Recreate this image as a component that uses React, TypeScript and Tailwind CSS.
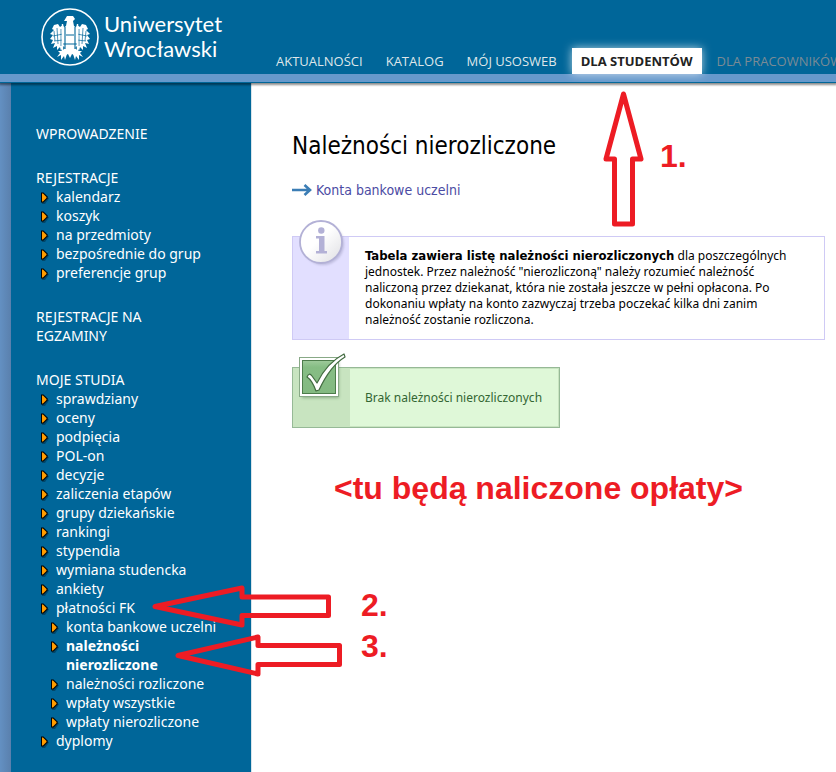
import React from 'react';

type Item = { label: string; active?: boolean; children?: Item[] };
type Section = { title: string; items: Item[] };

const NAV = ['AKTUALNOŚCI', 'KATALOG', 'MÓJ USOSWEB'];

const MENU: Section[] = [
  { title: 'WPROWADZENIE', items: [] },
  {
    title: 'REJESTRACJE',
    items: [
      { label: 'kalendarz' },
      { label: 'koszyk' },
      { label: 'na przedmioty' },
      { label: 'bezpośrednie do grup' },
      { label: 'preferencje grup' },
    ],
  },
  { title: 'REJESTRACJE NA EGZAMINY', items: [] },
  {
    title: 'MOJE STUDIA',
    items: [
      { label: 'sprawdziany' },
      { label: 'oceny' },
      { label: 'podpięcia' },
      { label: 'POL-on' },
      { label: 'decyzje' },
      { label: 'zaliczenia etapów' },
      { label: 'grupy dziekańskie' },
      { label: 'rankingi' },
      { label: 'stypendia' },
      { label: 'wymiana studencka' },
      { label: 'ankiety' },
      {
        label: 'płatności FK',
        children: [
          { label: 'konta bankowe uczelni' },
          { label: 'należności nierozliczone', active: true },
          { label: 'należności rozliczone' },
          { label: 'wpłaty wszystkie' },
          { label: 'wpłaty nierozliczone' },
        ],
      },
      { label: 'dyplomy' },
    ],
  },
];

function Crest() {
  const wing = (
    <g>
      <path d="M25 22 L23 18 L20 20 L18 17 L14 18 L12 22 L14 23 L10 27 L13 28 L10 32 L13 33 L11 37 L15 36 L13 41 L17 39 L17 43 L20 40 L21 44 L23 40 L26 36 Z" fill="#fff" />
      <path d="M17 21 L18 37 M14 24 L15 34 M21 22 L21 39 M13 29 L23 27 M14 34 L23 33" stroke="#006699" strokeWidth="0.7" fill="none" />
      <path d="M26 40 L22 44 L18 44 L20 46 L17 50 L21 48 L21 53 L24 49 L25 53 L27 47 Z" fill="#fff" />
    </g>
  );
  return (
    <svg className="size-[60px] shrink-0" viewBox="0 0 60 60" aria-hidden="true">
      <circle cx="30" cy="30" r="28" fill="none" stroke="#fff" strokeWidth="1.6" />
      {wing}
      <g transform="translate(60 0) scale(-1 1)">{wing}</g>
      <path d="M27 9 L33 9 L35 12 L33 14 L34 19 L38 22 L37 38 L34 43 L34 48 L32 47 L30 51 L28 47 L26 48 L26 43 L23 38 L22 22 L26 19 L27 14 L24 14 Z" fill="#fff" />
      <path d="M25 20 V42 M35 20 V42 M26 28 H34 M23 37 H37" stroke="#006699" strokeWidth="1.1" fill="none" />
      <path d="M22.500 17 V49 M37.500 17 V49" stroke="#fff" strokeWidth="1.4" />
    </svg>
  );
}

function Bullet() {
  return (
    <svg className="mt-[5px] h-[13px] w-[8px] shrink-0" viewBox="0 0 8 13" aria-hidden="true">
      <path d="M1 2 L4 2 L8 6.5 L4 12 L1 12 Z" fill="#000" opacity=".3" />
      <path d="M0 0.500 H2.500 L6.500 4.500 V6.500 L2.500 10.500 H0 Z" fill="#000" />
      <path d="M1 1.500 H2 L5.500 5 V6 L2 9.500 H1 Z" fill="#ff9c00" />
    </svg>
  );
}

function MenuList({ items }: { items: Item[] }) {
  return (
    <ul>
      {items.map((item) => (
        <li key={item.label}>
          <div className="flex gap-[7px]">
            <Bullet />
            <a href="#" className={item.active ? 'w-[120px] font-bold' : 'whitespace-nowrap'}>
              {item.label}
            </a>
          </div>
          {item.children && (
            <div className="pl-[10px]">
              <MenuList items={item.children} />
            </div>
          )}
        </li>
      ))}
    </ul>
  );
}

function InfoIcon() {
  return (
    <svg className="absolute -top-[18px] left-0 h-[50px] w-[57px]" viewBox="0 0 57 50" aria-hidden="true">
      <defs>
        <linearGradient id="disc" x1="0" y1="0" x2="1" y2="1">
          <stop offset=".45" stopColor="#fff" />
          <stop offset="1" stopColor="#dedee2" />
        </linearGradient>
        <filter id="soft" x="-30%" y="-30%" width="160%" height="160%">
          <feGaussianBlur stdDeviation="1.3" />
        </filter>
      </defs>
      <circle cx="30" cy="25" r="21" fill="#8888ad" opacity=".4" filter="url(#soft)" />
      <circle cx="28" cy="23" r="21" fill="url(#disc)" stroke="#b3b1d6" strokeWidth="1.8" />
      <circle cx="28.300" cy="11.500" r="3.200" fill="#b3b1d6" />
      <path d="M23 17 H31.500 V32 H34 V34.500 H23 V32 H26 V19.500 H23 Z" fill="#b3b1d6" />
    </svg>
  );
}

function CheckIcon() {
  return (
    <svg className="absolute -top-[15px] left-[3px] h-[52px] w-[53px]" viewBox="0 0 53 52" aria-hidden="true">
      <defs>
        <linearGradient id="box" x1="0" y1="0" x2="0" y2="1">
          <stop offset="0" stopColor="#a9d0a5" />
          <stop offset=".25" stopColor="#86bd84" />
          <stop offset="1" stopColor="#83b981" />
        </linearGradient>
        <filter id="blur" x="-30%" y="-30%" width="160%" height="160%">
          <feGaussianBlur stdDeviation="1.5" />
        </filter>
      </defs>
      <rect x="6" y="8" width="37" height="37" fill="#365f34" opacity=".4" filter="url(#blur)" />
      <rect x="3.500" y="4.500" width="39" height="39" fill="url(#box)" stroke="#88a986" />
      <rect x="5" y="6" width="36" height="36" fill="none" stroke="#fff" strokeWidth="2" />
      <rect x="6.500" y="7.500" width="33" height="33" fill="none" stroke="#4d7c4b" />
      <path d="M11 24 Q13 19 16 23 L21 30 C28 16 38 6 48 1 L49 4 C39 10 30 22 23 37 L20 38 Q16 27 11 24 Z" fill="#fff" stroke="#426b40" strokeWidth="1.2" strokeLinejoin="round" />
    </svg>
  );
}

export default function App() {
  return (
    <div className="relative flex min-h-screen flex-col overflow-hidden bg-white font-['Open_Sans','Noto_Sans',sans-serif]">
      <header className="relative border-b border-[#006699] bg-[#6699cc] pb-[8px] shadow-[0_1px_2px_1px_rgba(0,0,0,0.45)]">
        <div className="flex h-[74px] justify-between bg-[#006699]">
          <a href="#" className="flex items-start gap-[4px] pl-[40px] pt-[7px] text-white">
            <Crest />
            <span className="pt-[4px] font-[Lato,sans-serif] text-[22px] leading-[25px]">
              Uniwersytet
              <br />
              Wrocławski
            </span>
          </a>
          <nav className="flex w-[568px] shrink-0 items-end gap-[7px] whitespace-nowrap text-[13px] leading-[26px] text-[#dfe6ea]">
            {NAV.map((label) => (
              <a key={label} href="#" className="px-[8px]">
                {label}
              </a>
            ))}
            <a href="#" className="bg-white px-[9px] font-bold text-[#222] shadow-[0_0_10px_rgba(255,255,255,0.7)]">
              DLA STUDENTÓW
            </a>
            <a href="#" className="px-[8px] text-[#7b8b95]">
              DLA PRACOWNIKÓW
            </a>
          </nav>
        </div>
      </header>

      <div className="flex flex-1 bg-linear-to-r from-[#6390c2] to-[#5a80ad] to-[11px] pl-[11px]">
        <aside className="w-[240px] shrink-0 bg-[#006699] pb-5 pl-[25px] pt-[41px] font-['Noto_Sans',sans-serif] text-[14px] leading-[19px] text-white">
          <nav className="flex flex-col gap-[25px]">
            {MENU.map((section) => (
              <section key={section.title}>
                <a href="#" className="block w-[150px]">
                  {section.title}
                </a>
                <div className="pl-[5px]">
                  <MenuList items={section.items} />
                </div>
              </section>
            ))}
          </nav>
        </aside>

        <main className="min-w-0 flex-1 border-l border-[#d9e4ea] bg-white pl-[40px] pr-[11px] pt-[45px] font-['Noto_Sans',sans-serif] text-[12px] leading-[16px] text-black">
          <h1 className="font-['DejaVu_Sans_Condensed','DejaVu_Sans',sans-serif] text-[24px] leading-[36px]">Należności nierozliczone</h1>
          <a href="#" className="mt-[16px] flex items-center gap-[4px] font-['DejaVu_Sans_Condensed','DejaVu_Sans',sans-serif] text-[14px] leading-[20px] text-[#4b4ba3]">
            <svg className="h-[12px] w-[20px]" viewBox="0 0 20 12" aria-hidden="true">
              <path d="M0 6 H18 M12.500 1 L18 6 L12.500 11" fill="none" stroke="#3b7db5" strokeWidth="2.600" />
            </svg>
            Konta bankowe uczelni
          </a>
          <div className="relative mt-[36px] flex border border-[#cfcaf5]">
            <div className="w-[56px] shrink-0 bg-[#e2dfff]" />
            <InfoIcon />
            <p className="py-[11px] pl-[16px] pr-[32px]">
              <strong className="font-['DejaVu_Sans_Condensed','DejaVu_Sans',sans-serif] text-[13px] leading-none">
                Tabela zawiera listę należności nierozliczonych
              </strong>{' '}
              dla poszczególnych jednostek. Przez należność "nierozliczoną" należy rozumieć należność naliczoną przez
              dziekanat, która nie została jeszcze w pełni opłacona. Po dokonaniu wpłaty na konto zazwyczaj trzeba
              poczekać kilka dni zanim należność zostanie rozliczona.
            </p>
          </div>
          <div className="relative mt-[27px] flex w-fit border border-[#96b996] bg-[#dff8d8]">
            <div className="w-[57px] shrink-0 bg-[#c8e4c0]" />
            <CheckIcon />
            <p className="border border-l-0 border-[#c8e4c0] pb-[20px] pl-[15px] pr-[16px] pt-[21px] text-[#336633]">Brak należności nierozliczonych</p>
          </div>
        </main>
      </div>

      <div className="pointer-events-none absolute inset-0 font-['Liberation_Sans',Arial,sans-serif] text-[32px] font-bold leading-[36px] text-[#ed1c24]">
        <svg className="absolute left-0 top-0 h-[772px] w-[836px]" viewBox="0 0 836 772" fill="none" stroke="#ed1c24" strokeWidth="5" strokeLinejoin="round" aria-hidden="true">
          <path d="M623.500 94 L641 159 H632.500 V224 H614.500 V159 H606 Z" />
          <path d="M155 606.500 L242 588 V597 H328.500 V615.500 H242 V625 Z" />
          <path d="M178 655.500 L258 637 V645.500 H339.500 V664.500 H258 V674 Z" />
        </svg>
        <span className="absolute left-[660px] top-[138px]">1.</span>
        <span className="absolute left-[361px] top-[587px]">2.</span>
        <span className="absolute left-[361px] top-[628px]">3.</span>
        <span className="absolute left-[334px] top-[470px] whitespace-nowrap">&lt;tu będą naliczone opłaty&gt;</span>
      </div>
    </div>
  );
}
